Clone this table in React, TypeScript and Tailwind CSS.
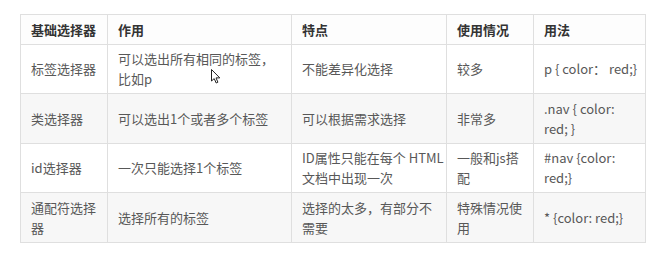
import type { ReactNode } from 'react';

type Row = ReactNode[];

const headers = ['基础选择器', '作用', '特点', '使用情况', '用法'];

const rows: Row[] = [
  [
    '标签选择器',
    <>可以选出所有相同的标签，<br />比如p</>,
    '不能差异化选择',
    '较多',
    'p { color： red;}',
  ],
  [
    '类选择器',
    '可以选出1个或者多个标签',
    '可以根据需求选择',
    '非常多',
    <>.nav {'{'} color:<br />red; {'}'}</>,
  ],
  [
    'id选择器',
    '一次只能选择1个标签',
    <>ID属性只能在每个 HTML<br />文档中出现一次</>,
    <>一般和js搭<br />配</>,
    <>#nav {'{'}color:<br />red;{'}'}</>,
  ],
  [
    <>通配符选择<br />器</>,
    '选择所有的标签',
    <>选择的太多，有部分不<br />需要</>,
    <>特殊情况使<br />用</>,
    '* {color: red;}',
  ],
];

function Cursor() {
  return (
    <svg
      className="absolute left-[211px] top-[69px]"
      width="10"
      height="15"
      viewBox="0 0 10 15"
    >
      <path
        d="M0.5 0.5 L0.5 12 L3.2 9.6 L5.2 14 L6.9 13.2 L5 8.9 L8.8 8.9 Z"
        fill="#fff"
        stroke="#222"
        strokeWidth="1"
        strokeLinejoin="round"
      />
    </svg>
  );
}

export default function App() {
  return (
    <div
      className="relative w-[671px] h-[267px] bg-white pt-[14px] pl-[20px] overflow-hidden"
      style={{ fontFamily: '"Noto Sans CJK SC", "Noto Sans", sans-serif' }}
    >
      <table className="table-fixed border-collapse w-[625px] text-[13px] leading-[20px] text-[#585858]">
        <colgroup>
          <col className="w-[87px]" />
          <col className="w-[184px]" />
          <col className="w-[155px]" />
          <col className="w-[87px]" />
          <col className="w-[112px]" />
        </colgroup>
        <thead>
          <tr className="bg-[#fdfdfd]">
            {headers.map((h) => (
              <th
                key={h}
                className="border border-[#dfdfdf] px-[10px] py-[4.5px] text-left font-bold text-[#333] whitespace-nowrap"
              >
                {h}
              </th>
            ))}
          </tr>
        </thead>
        <tbody>
          {rows.map((row, i) => (
            <tr key={i} className={i % 2 === 1 ? 'bg-[#f7f7f7]' : 'bg-white'}>
              {row.map((cell, j) => (
                <td
                  key={j}
                  className={
                    i % 2 === 1
                      ? 'border border-[#dfdfdf] px-[10px] py-[4.5px] align-middle whitespace-nowrap'
                      : 'border border-[#dfdfdf] px-[10px] py-[4px] align-middle whitespace-nowrap'
                  }
                >
                  {cell}
                </td>
              ))}
            </tr>
          ))}
        </tbody>
      </table>
      <Cursor />
    </div>
  );
}
